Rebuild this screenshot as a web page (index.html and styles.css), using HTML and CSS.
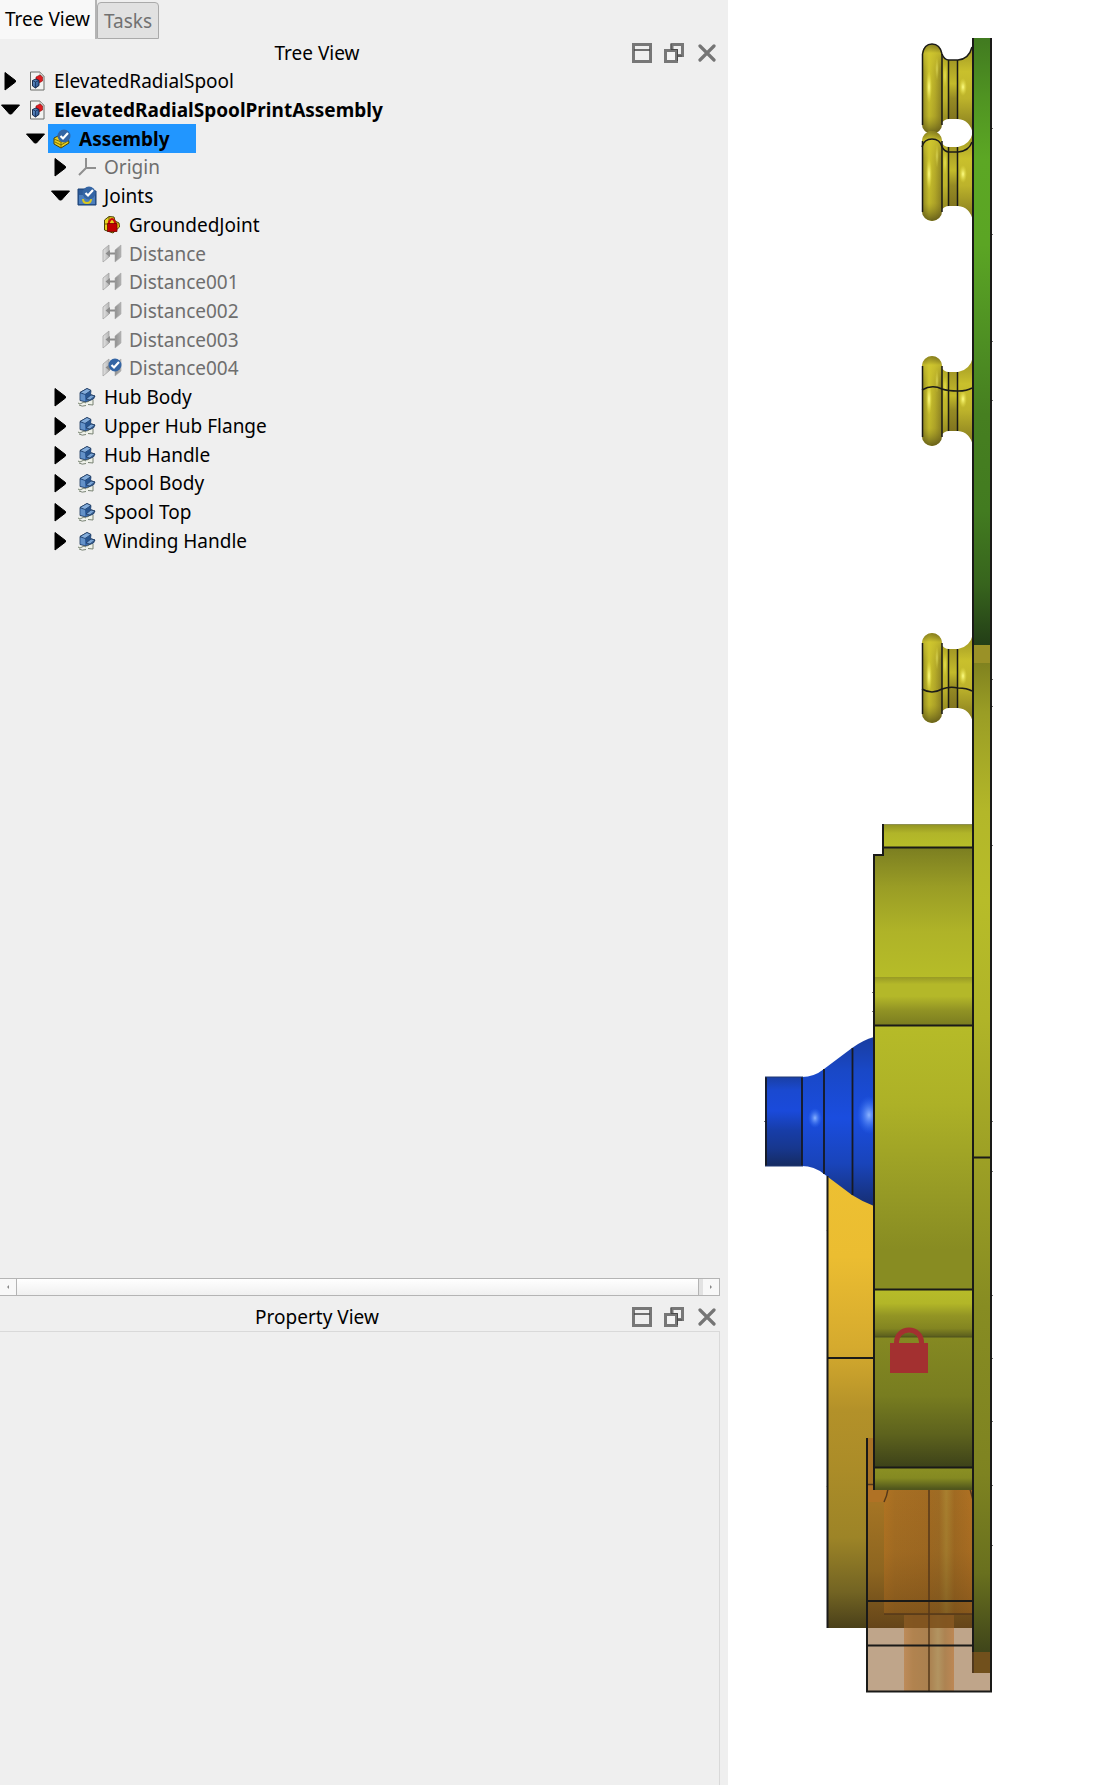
FILE: index.html
```html
<!DOCTYPE html>
<html lang="en">
<head>
<meta charset="utf-8">
<title>ElevatedRadialSpoolPrintAssembly</title>
<link rel="stylesheet" href="styles.css">
</head>
<body>
<svg class="defs" aria-hidden="true">
  <defs>
    <linearGradient id="cubeBlue" x1="0" y1="0" x2="1" y2="1"><stop offset="0" stop-color="#729fcf"/><stop offset="1" stop-color="#204a87"/></linearGradient>
    <linearGradient id="metal"><stop offset="0" stop-color="#e4e4e4"/><stop offset="1" stop-color="#b5b5b5"/></linearGradient>
    <linearGradient id="metalDark"><stop offset="0" stop-color="#8e8e8e"/><stop offset="1" stop-color="#b4b4b4"/></linearGradient>
  </defs>
  <symbol id="right" viewBox="0 0 20 20"><path d="M5 1.500 15.500 9.500V11L5 19Z" stroke="#000" stroke-linejoin="round"/></symbol>
  <symbol id="down" viewBox="0 0 20 20"><path d="M1.500 5H19.500L11.500 14H9.500Z" stroke="#000" stroke-linejoin="round"/></symbol>
  <symbol id="document" viewBox="0 0 20 20">
    <path d="M3.500 1H13L17 5V19H3.500Z" fill="#f3f3f1" stroke="#6b6d68"/><path d="M13 1V5H17Z" fill="#d7d8d4" stroke="#90928e" stroke-width=".7"/>
    <path d="M9 6 13 4 15.500 6V10L12 12 9 10Z" fill="#df1b20" stroke="#8a0a0a" stroke-width=".6"/>
    <path d="M5.500 9.500 9 8 12 9.500V14.500L8.500 17 5.500 15Z" fill="url(#cubeBlue)" stroke="#0b1d3a" stroke-width=".9"/><path d="M5.500 9.500 8.500 11 12 9.500M8.500 11V17" fill="none" stroke="#12305c" stroke-width=".8"/>
  </symbol>
  <symbol id="check" viewBox="0 0 14 14"><circle cx="7" cy="7" r="6.500" fill="#3465a4"/><path d="M3.500 7 6 9.500 11 4" fill="none" stroke="#fff" stroke-width="2.200"/></symbol>
  <symbol id="assembly" viewBox="0 0 20 20">
    <path d="M2 9 8 6 16 8 17 14 9 19 2 15Z" fill="#e9cf1d" stroke="#494005"/><path d="M2 10 9 13 17 10M9 13V18.500M3 13 9 16 16 12" fill="none" stroke="#716406" stroke-width=".9"/>
    <use href="#check" x="5" y="0" width="14" height="14"/>
  </symbol>
  <symbol id="origin" viewBox="0 0 20 20"><path d="M9 1V11H19M9 11 2 18" fill="none" stroke="#8f8f8f" stroke-width="2"/></symbol>
  <symbol id="joints" viewBox="0 0 20 20">
    <path d="M1 3H9V5H19V19H1Z" fill="#2c5a98" stroke="#1b4174"/><path d="M2 9H18V18H2Z" fill="#4c7fbd"/>
    <path d="M6 13Q6 17 10 17T14 13" fill="none" stroke="#dac91d" stroke-width="2"/><use href="#check" x="5" y="0" width="14" height="14"/>
  </symbol>
  <symbol id="grounded" viewBox="0 0 20 20">
    <path d="M2.500 5 7 1.500 12 2 13 6 17 8 17.500 12 11 18 2.500 15Z" fill="#e8d21d" stroke="#4b4205"/><path d="M3 9H7M7 2V6M14 7V15" stroke="#4b4205" stroke-width=".8"/>
    <path d="M7 9V7Q10 1 13 7V9" fill="none" stroke="#c80d0d" stroke-width="2.200"/><path d="M5.500 8.500H15V16.500H5.500Z" fill="#c00000" stroke="#780000" stroke-width=".8"/>
  </symbol>
  <symbol id="distance" viewBox="0 0 20 20">
    <path d="M1 6 7 1V13L1 18Z" fill="url(#metal)" stroke="#a3a3a3" stroke-width=".8"/><path d="M13 6 19 1V13L13 18Z" fill="url(#metalDark)" stroke="#aaa" stroke-width=".6"/>
    <path d="M3.500 9.500 8 6V8.500H13V10.500H8V13Z" fill="#8c8c8c"/>
  </symbol>
  <symbol id="distance-ok" viewBox="0 0 20 20"><use href="#distance"/><use href="#check" x="6" y="0" width="14" height="14"/></symbol>
  <symbol id="part" viewBox="0 0 20 20">
    <path d="M1 16Q4 13 7 15L16 12 16 18 11 17 8 19 6 17 2 18Z" fill="#eef1e8"/>
    <path d="M3 5.500 10 1.500 14 3.500 13.500 7.500 18 9 16.500 12 9 15 3 13.500Z" fill="#3a6cae" stroke="#173258" stroke-width=".8"/>
    <path d="M3 5.500 10 1.500 14 3.500 8 7.500Z" fill="#84addb" stroke="#173258" stroke-width=".7"/>
    <path d="M3.500 6.500 8 8V14L3.500 13Z" fill="#6492c8"/><path d="M8 7.500 13.500 4.500V8L9 12Z" fill="#28558f"/>
    <path d="M9 12 14 8 18 9 13 13Z" fill="#79a4d5" stroke="#173258" stroke-width=".7"/>
    <path d="M1 16Q3 18 5 16T9 16M10 15 12 14M16 13V18L11 17.500M2 18Q5 20 9 18.500" fill="none" stroke="#6c7766" stroke-width=".9"/>
  </symbol>
  <symbol id="dock" viewBox="0 0 20 20"><path d="M1.500 1.500H18.500V18.500H1.500Z" fill="none" stroke="#777" stroke-width="3"/><path d="M2 7H18" stroke="#444" stroke-width="1.500"/></symbol>
  <symbol id="float" viewBox="0 0 20 20"><path d="M8 7V1.500H18.500V12.500H13" fill="none" stroke="#777" stroke-width="3"/><path d="M1.500 7.500H12.500V18.500H1.500Z" fill="#f3f3f3" stroke="#777" stroke-width="3"/><path d="M7 1V6.500H13.500V18M13 13H18" fill="none" stroke="#484848"/></symbol>
  <symbol id="close" viewBox="0 0 20 20"><path d="M4 3 18 17M18 3 4 17" stroke="#757575" stroke-width="3.200" stroke-linecap="round"/></symbol>
</svg>

<div class="app">
  <aside class="sidebar">
    <section class="dock dock-tree">
      <div class="tabs" role="tablist">
        <button class="tab tab-active" role="tab" aria-selected="true">Tree View</button>
        <button class="tab" role="tab" aria-selected="false">Tasks</button>
      </div>
      <header class="titlebar">
        <h2 class="title">Tree View</h2>
        <button class="tool" aria-label="Dock"><svg class="icon"><use href="#dock"/></svg></button>
        <button class="tool" aria-label="Float"><svg class="icon"><use href="#float"/></svg></button>
        <button class="tool" aria-label="Close"><svg class="icon"><use href="#close"/></svg></button>
      </header>
      <ul class="tree">
        <li class="row"><button class="toggle" aria-label="Expand"><svg class="icon"><use href="#right"/></svg></button><span class="item"><svg class="icon"><use href="#document"/></svg>ElevatedRadialSpool</span></li>
        <li class="row"><button class="toggle" aria-label="Collapse"><svg class="icon"><use href="#down"/></svg></button><span class="item active"><svg class="icon"><use href="#document"/></svg>ElevatedRadialSpoolPrintAssembly</span></li>
        <li class="row level-1"><button class="toggle" aria-label="Collapse"><svg class="icon"><use href="#down"/></svg></button><span class="item active selected"><svg class="icon"><use href="#assembly"/></svg>Assembly</span></li>
        <li class="row level-2"><button class="toggle" aria-label="Expand"><svg class="icon"><use href="#right"/></svg></button><span class="item hidden-object"><svg class="icon"><use href="#origin"/></svg>Origin</span></li>
        <li class="row level-2"><button class="toggle" aria-label="Collapse"><svg class="icon"><use href="#down"/></svg></button><span class="item"><svg class="icon"><use href="#joints"/></svg>Joints</span></li>
        <li class="row level-3"><span class="toggle"></span><span class="item"><svg class="icon"><use href="#grounded"/></svg>GroundedJoint</span></li>
        <li class="row level-3"><span class="toggle"></span><span class="item hidden-object"><svg class="icon"><use href="#distance"/></svg>Distance</span></li>
        <li class="row level-3"><span class="toggle"></span><span class="item hidden-object"><svg class="icon"><use href="#distance"/></svg>Distance001</span></li>
        <li class="row level-3"><span class="toggle"></span><span class="item hidden-object"><svg class="icon"><use href="#distance"/></svg>Distance002</span></li>
        <li class="row level-3"><span class="toggle"></span><span class="item hidden-object"><svg class="icon"><use href="#distance"/></svg>Distance003</span></li>
        <li class="row level-3"><span class="toggle"></span><span class="item hidden-object"><svg class="icon"><use href="#distance-ok"/></svg>Distance004</span></li>
        <li class="row level-2"><button class="toggle" aria-label="Expand"><svg class="icon"><use href="#right"/></svg></button><span class="item"><svg class="icon"><use href="#part"/></svg>Hub Body</span></li>
        <li class="row level-2"><button class="toggle" aria-label="Expand"><svg class="icon"><use href="#right"/></svg></button><span class="item"><svg class="icon"><use href="#part"/></svg>Upper Hub Flange</span></li>
        <li class="row level-2"><button class="toggle" aria-label="Expand"><svg class="icon"><use href="#right"/></svg></button><span class="item"><svg class="icon"><use href="#part"/></svg>Hub Handle</span></li>
        <li class="row level-2"><button class="toggle" aria-label="Expand"><svg class="icon"><use href="#right"/></svg></button><span class="item"><svg class="icon"><use href="#part"/></svg>Spool Body</span></li>
        <li class="row level-2"><button class="toggle" aria-label="Expand"><svg class="icon"><use href="#right"/></svg></button><span class="item"><svg class="icon"><use href="#part"/></svg>Spool Top</span></li>
        <li class="row level-2"><button class="toggle" aria-label="Expand"><svg class="icon"><use href="#right"/></svg></button><span class="item"><svg class="icon"><use href="#part"/></svg>Winding Handle</span></li>
      </ul>
      <div class="scrollbar">
        <button class="scroll-step" aria-label="Scroll left"><svg class="step-icon" viewBox="0 0 4 6"><path d="M3 1V5L1 3Z"/></svg></button>
        <div class="scroll-handle"></div>
        <button class="scroll-step" aria-label="Scroll right"><svg class="step-icon" viewBox="0 0 4 6"><path d="M1 1V5L3 3Z"/></svg></button>
      </div>
    </section>
    <section class="dock dock-property">
      <header class="titlebar">
        <h2 class="title">Property View</h2>
        <button class="tool" aria-label="Dock"><svg class="icon"><use href="#dock"/></svg></button>
        <button class="tool" aria-label="Float"><svg class="icon"><use href="#float"/></svg></button>
        <button class="tool" aria-label="Close"><svg class="icon"><use href="#close"/></svg></button>
      </header>
      <div class="properties"></div>
    </section>
  </aside>

  <main class="viewport">
    <svg class="model" viewBox="728 0 392 1785" role="img" aria-label="Side view of the spool assembly">
      <defs>
        <linearGradient id="green" gradientUnits="userSpaceOnUse" x1="0" y1="38" x2="0" y2="645"><stop offset="0" stop-color="#417a20"/><stop offset=".1" stop-color="#509422"/><stop offset=".2" stop-color="#5ca724"/><stop offset=".34" stop-color="#5ba524"/><stop offset=".5" stop-color="#4e8f23"/><stop offset=".62" stop-color="#467f20"/><stop offset=".78" stop-color="#427b20"/><stop offset=".9" stop-color="#37641d"/><stop offset="1" stop-color="#233e17"/></linearGradient>
        <linearGradient id="plate" gradientUnits="userSpaceOnUse" x1="0" y1="663" x2="0" y2="1652"><stop offset="0" stop-color="#80821f"/><stop offset=".05" stop-color="#9a9d25"/><stop offset=".15" stop-color="#b3b729"/><stop offset=".24" stop-color="#b7bc29"/><stop offset=".36" stop-color="#b0b428"/><stop offset=".5" stop-color="#9da025"/><stop offset=".65" stop-color="#878c22"/><stop offset=".82" stop-color="#7e8321"/><stop offset=".92" stop-color="#69701e"/><stop offset="1" stop-color="#3f451a"/></linearGradient>
        <linearGradient id="lip" x2="0" y2="1"><stop offset="0" stop-color="#909122"/><stop offset=".4" stop-color="#b1b529"/><stop offset="1" stop-color="#b8bd28"/></linearGradient>
        <linearGradient id="upper" x2="0" y2="1"><stop offset="0" stop-color="#7b7e21"/><stop offset=".3" stop-color="#999c25"/><stop offset=".65" stop-color="#afb328"/><stop offset="1" stop-color="#b6bc28"/></linearGradient>
        <linearGradient id="groove" x2="0" y2="1"><stop offset="0" stop-color="#989a25"/><stop offset=".15" stop-color="#b4b829"/><stop offset=".4" stop-color="#b4b829"/><stop offset=".7" stop-color="#909224"/><stop offset="1" stop-color="#7b7d20"/></linearGradient>
        <linearGradient id="middle" x2="0" y2="1"><stop offset="0" stop-color="#b6bb28"/><stop offset=".3" stop-color="#adb127"/><stop offset=".65" stop-color="#959925"/><stop offset=".85" stop-color="#888c22"/><stop offset="1" stop-color="#888c22"/></linearGradient>
        <linearGradient id="step" x2="0" y2="1"><stop offset="0" stop-color="#b7bc29"/><stop offset=".3" stop-color="#b2b628"/><stop offset=".55" stop-color="#939524"/><stop offset=".82" stop-color="#838521"/><stop offset="1" stop-color="#595c1d"/></linearGradient>
        <linearGradient id="lower" x2="0" y2="1"><stop offset="0" stop-color="#858922"/><stop offset=".45" stop-color="#787d20"/><stop offset=".75" stop-color="#5d621d"/><stop offset="1" stop-color="#3d4219"/></linearGradient>
        <linearGradient id="foot" x2="0" y2="1"><stop offset="0" stop-color="#8b9023"/><stop offset=".5" stop-color="#858a22"/><stop offset="1" stop-color="#4f551c"/></linearGradient>
        <linearGradient id="amber" gradientUnits="userSpaceOnUse" x1="0" y1="1175" x2="0" y2="1628"><stop offset="0" stop-color="#edc032"/><stop offset=".18" stop-color="#ebbd31"/><stop offset=".38" stop-color="#d5aa2e"/><stop offset=".52" stop-color="#b39129"/><stop offset=".65" stop-color="#ab8c28"/><stop offset=".8" stop-color="#9d8427"/><stop offset=".92" stop-color="#736423"/><stop offset="1" stop-color="#4a4019"/></linearGradient>
        <linearGradient id="blueCylinder" x2="0" y2="1"><stop offset="0" stop-color="#193fa5"/><stop offset=".15" stop-color="#1a49d0"/><stop offset=".38" stop-color="#1a4adb"/><stop offset=".6" stop-color="#173da8"/><stop offset=".8" stop-color="#17378e"/><stop offset="1" stop-color="#152b62"/></linearGradient>
        <linearGradient id="blueCone" x2="0" y2="1"><stop offset="0" stop-color="#193da0"/><stop offset=".2" stop-color="#1948c7"/><stop offset=".48" stop-color="#1a4ddf"/><stop offset=".75" stop-color="#1944ba"/><stop offset="1" stop-color="#162e72"/></linearGradient>
        <radialGradient id="glint"><stop offset="0" stop-color="#8cb4ff"/><stop offset="1" stop-color="#3270f5" stop-opacity="0"/></radialGradient>
        <radialGradient id="spark"><stop offset="0" stop-color="#ffff88"/><stop offset="1" stop-color="#e8e040" stop-opacity="0"/></radialGradient>
        <linearGradient id="rim"><stop offset="0" stop-color="#8a821f"/><stop offset=".35" stop-color="#cdc52d"/><stop offset=".65" stop-color="#b5aa29"/><stop offset="1" stop-color="#857a20"/></linearGradient>
        <linearGradient id="shade" x2="0" y2="1"><stop offset="0" stop-color="#5b5317" stop-opacity=".55"/><stop offset=".1" stop-color="#d0c72e" stop-opacity=".7"/><stop offset=".3" stop-color="#d0c72e" stop-opacity=".15"/><stop offset=".8" stop-color="#8a8020" stop-opacity=".2"/><stop offset="1" stop-color="#4a4415" stop-opacity=".75"/></linearGradient>
        <linearGradient id="neck" x2="0" y2="1"><stop offset="0" stop-color="#9b9224"/><stop offset=".3" stop-color="#c9c02c"/><stop offset=".6" stop-color="#bdb32b"/><stop offset="1" stop-color="#81771e"/></linearGradient>
        <linearGradient id="band" x2="0" y2="1"><stop offset="0" stop-color="#a39825"/><stop offset=".4" stop-color="#c3ba2b"/><stop offset=".65" stop-color="#968b24"/><stop offset="1" stop-color="#81751f"/></linearGradient>
        <linearGradient id="shaft"><stop offset="0" stop-color="#b17423"/><stop offset=".12" stop-color="#a76f23"/><stop offset=".5" stop-color="#a26b22"/><stop offset=".62" stop-color="#9f6c24"/><stop offset=".7" stop-color="#a9802f"/><stop offset=".79" stop-color="#a16b22"/><stop offset="1" stop-color="#b07123"/></linearGradient>
        <linearGradient id="pin"><stop offset="0" stop-color="#bd8b5a"/><stop offset=".18" stop-color="#b1834f"/><stop offset=".5" stop-color="#aa804f"/><stop offset=".68" stop-color="#b29461"/><stop offset=".82" stop-color="#ad8352"/><stop offset="1" stop-color="#bd8754"/></linearGradient>
        <linearGradient id="dim" x2="0" y2="1"><stop offset="0" stop-color="#5a3a14" stop-opacity="0"/><stop offset=".5" stop-color="#5a3a14" stop-opacity=".1"/><stop offset="1" stop-color="#4d3211" stop-opacity=".4"/></linearGradient>
        <linearGradient id="ghost" gradientUnits="userSpaceOnUse" x1="0" y1="1438" x2="0" y2="1628"><stop offset="0" stop-color="#aa7325"/><stop offset=".35" stop-color="#a47424"/><stop offset=".7" stop-color="#8d6520"/><stop offset="1" stop-color="#654519"/></linearGradient>
        <g id="knob">
          <path d="M941 55Q944 60 949 60H958Q970 58 973 45V134Q970 120 958 119H949Q944 119 941 124Z" fill="url(#neck)"/>
          <rect x="949" y="60" width="9" height="59" fill="url(#band)"/>
          <rect x="922" y="44" width="20" height="90" rx="10" fill="url(#rim)"/><rect x="922" y="44" width="20" height="90" rx="10" fill="url(#shade)"/>
          <ellipse cx="929" cy="87" rx="3" ry="16" fill="url(#spark)"/><ellipse cx="963" cy="87" rx="4" ry="9" fill="url(#spark)"/><ellipse cx="937" cy="69" rx="2" ry="12" fill="url(#spark)" opacity=".5"/><ellipse cx="945" cy="76" rx="2" ry="12" fill="url(#spark)" opacity=".5"/>
          <path d="M922.500 54V125M942 54V125M948.500 60V119M957.500 60V119" fill="none" stroke="#1a1a16" stroke-width="1.500"/>
        </g>
      </defs>

      <use href="#knob"/>
      <use href="#knob" y="87"/>
      <use href="#knob" y="312"/>
      <use href="#knob" y="589"/>
      <g fill="none" stroke="#1b1b18" stroke-width="1.500">
        <path d="M922.500 54Q924 44 932 44T942 54Q944 60 949 60H958Q969 59 972 47"/>
        <path d="M922 147Q924 139 932 139T942 147Q945 152 949 152H958Q969 151 972 142"/>
        <path d="M922 390Q932 384 942 389 948 391 958 391 967 391 972 388"/>
        <path d="M922 689Q932 695 942 689 950 686 958 688 967 688 972 691"/>
      </g>

      <path d="M827 1170H873V1440H867V1628H827Z" fill="url(#amber)"/>
      <path d="M867 1628H974V1673H991V1692H867Z" fill="#bfa58a"/>
      <path d="M867 1438H974V1628H867Z" fill="url(#ghost)"/>
      <path d="M868 1485H884V1502H868Z" fill="#b07225"/>
      <path d="M884 1489H973V1614H884Z" fill="url(#shaft)"/><path d="M884 1489H973V1614H884Z" fill="url(#dim)"/>
      <path d="M904 1615H954V1691H904Z" fill="url(#pin)"/><path d="M904 1615H954V1628H904Z" fill="#7a4d17" opacity=".85"/>
      <g fill="none" stroke="#56381a" stroke-width="1.500"><path d="M888 1489Q887 1496 884 1502M970 1489 973 1500M884 1614H973M929 1490V1692M866 1484.500H874"/></g>

      <path d="M765 1077H803V1166H765Z" fill="url(#blueCylinder)"/>
      <path d="M802 1077Q814 1077 824 1069L852 1048Q863 1040 874 1037V1206Q863 1202 852 1195L824 1174Q814 1166 802 1166Z" fill="url(#blueCone)"/>
      <ellipse cx="815" cy="1118" rx="7" ry="10" fill="url(#glint)"/><ellipse cx="869" cy="1115" rx="12" ry="19" fill="url(#glint)"/>
      <path d="M766 1077V1166M802 1077V1166M824 1069V1174M852.500 1048V1195" fill="none" stroke="#171a22" stroke-width="1.800"/>
      <path d="M765 1077H803M765 1166H803" stroke="#203875"/>

      <rect x="882" y="824" width="91" height="23" fill="url(#lip)"/>
      <path d="M883 847H973V977H874V855H883Z" fill="url(#upper)"/>
      <rect x="874" y="977" width="99" height="48" fill="url(#groove)"/>
      <rect x="874" y="1025" width="99" height="264" fill="url(#middle)"/>
      <rect x="874" y="1289" width="99" height="48" fill="url(#step)"/>
      <rect x="874" y="1337" width="99" height="130" fill="url(#lower)"/>
      <rect x="874" y="1467" width="99" height="22" fill="url(#foot)"/>
      <path d="M883 824.500H973" stroke="#8e9050"/>

      <rect x="973" y="38" width="18" height="607" fill="url(#green)"/>
      <rect x="973" y="645" width="18" height="18" fill="#9a9127"/>
      <rect x="973" y="663" width="18" height="989" fill="url(#plate)"/>
      <rect x="973" y="1652" width="18" height="21" fill="#71501c"/>

      <g fill="none" stroke="#1a1a18" stroke-width="2">
        <path d="M973 38V1652M991 38V1692M883 824V855H874V1490M883 847.500H973M874 1025.500H973M874 1289.500H973M874 1467.500H973M973 1157.500H991"/>
        <path d="M827.500 1176V1628M827 1358H873M867 1438V1692M866 1601H973M866 1645.500H973M866 1691.500H992"/>
        <path d="M973 1652V1673" stroke="#51381c"/>
      </g>
      <path d="M875 1337H972M875 1489.500H972" stroke="#50551c"/>
      <path d="M992 128.500h1M992 234.500h1M992 341.500h1M992 400.500h1M992 679.500h1M992 706.500h1M992 845.500h1M992 1121.500h1M992 1171.500h1M992 1295.500h1M992 1358.500h1M992 1421.500h1M992 1485.500h1M992 1545.500h1M872 992.500h1M872 1011.500h1M764 1121.500h1M826 1230.500h1M826 1486.500h1" stroke="#777"/>

      <path d="M896.500 1344V1342A12.500 12 0 0 1 921.500 1342V1344" fill="none" stroke="#a33030" stroke-width="5"/>
      <rect x="890" y="1343" width="38" height="30" fill="#a33030"/>
    </svg>
  </main>
</div>
</body>
</html>
```
FILE: styles.css
```css
* {
  box-sizing: border-box;
}

body {
  margin: 0;
  background: #fff;
  color: #000;
  font: 19px/24px "Noto Sans", sans-serif;
}

button {
  margin: 0;
  padding: 0;
  border: 0;
  background: none;
  color: inherit;
  font: inherit;
}

.defs {
  display: block;
  width: 0;
  height: 0;
}

.app {
  display: grid;
  grid-template-columns: 65fr 35fr;
  min-height: 100vh;
}

.sidebar {
  display: flex;
  flex-direction: column;
  background: #efefef;
}

.dock {
  display: flex;
  flex-direction: column;
  padding-right: 8px;
}

.dock-tree {
  flex: 8 1 0;
  padding-bottom: 3px;
}

.dock-property {
  flex: 3 1 0;
}

.tabs {
  display: flex;
  align-items: flex-end;
  height: 39px;
}

.tab {
  height: 37px;
  padding: 0 6px;
  border: 1px solid #aaa;
  border-radius: 4px 4px 0 0;
  background: #e1e1e1;
  color: #717171;
}

.tab-active {
  height: 39px;
  padding: 0 5px 2px;
  border-width: 0 2px 0 0;
  border-color: #b4b4b4;
  border-radius: 0;
  background: #f8f8f8;
  color: #000;
}

.titlebar {
  display: flex;
  align-items: center;
  gap: 12px;
  height: 28px;
  padding-right: 4px;
}

.dock-property .titlebar {
  height: 32px;
  padding-top: 4px;
}

.title {
  flex: 1;
  margin: 0;
  padding-left: 14px;
  font: inherit;
  text-align: center;
}

.tool {
  display: flex;
}

.icon {
  flex: none;
  width: 20px;
  height: 20px;
}

.tree {
  display: grid;
  grid-auto-rows: 1fr;
  height: 488px;
  margin: 0;
  padding: 0;
  list-style: none;
}

.row {
  display: flex;
}

.level-1 {
  padding-left: 25px;
}

.level-2 {
  padding-left: 50px;
}

.level-3 {
  padding-left: 75px;
}

.toggle {
  display: flex;
  align-items: center;
  width: 23px;
}

.item {
  display: flex;
  align-items: center;
  gap: 7px;
  padding: 0 26px 0 4px;
}

.active {
  font-weight: 700;
}

.selected {
  background: #2196ff;
}

.hidden-object {
  color: #6e6e6e;
}

.scrollbar {
  display: flex;
  height: 18px;
  margin-top: auto;
  border: 1px solid #b4b4b4;
  border-left: 0;
  background: #e2e2e2;
}

.scroll-step {
  display: flex;
  align-items: center;
  justify-content: center;
  width: 16px;
  background: #f8f8f8;
}

.step-icon {
  width: 4px;
  height: 6px;
  fill: #888;
}

.scroll-handle {
  flex: 1;
  margin-right: 4px;
  border: solid #b4b4b4;
  border-width: 0 1px;
  background: linear-gradient(#fff, #f0f0f0);
}

.properties {
  flex: 1;
  border: solid #d9d9d9;
  border-width: 1px 1px 0 0;
}

.viewport {
  background: #fff;
}

.model {
  display: block;
  width: 100%;
}
```
